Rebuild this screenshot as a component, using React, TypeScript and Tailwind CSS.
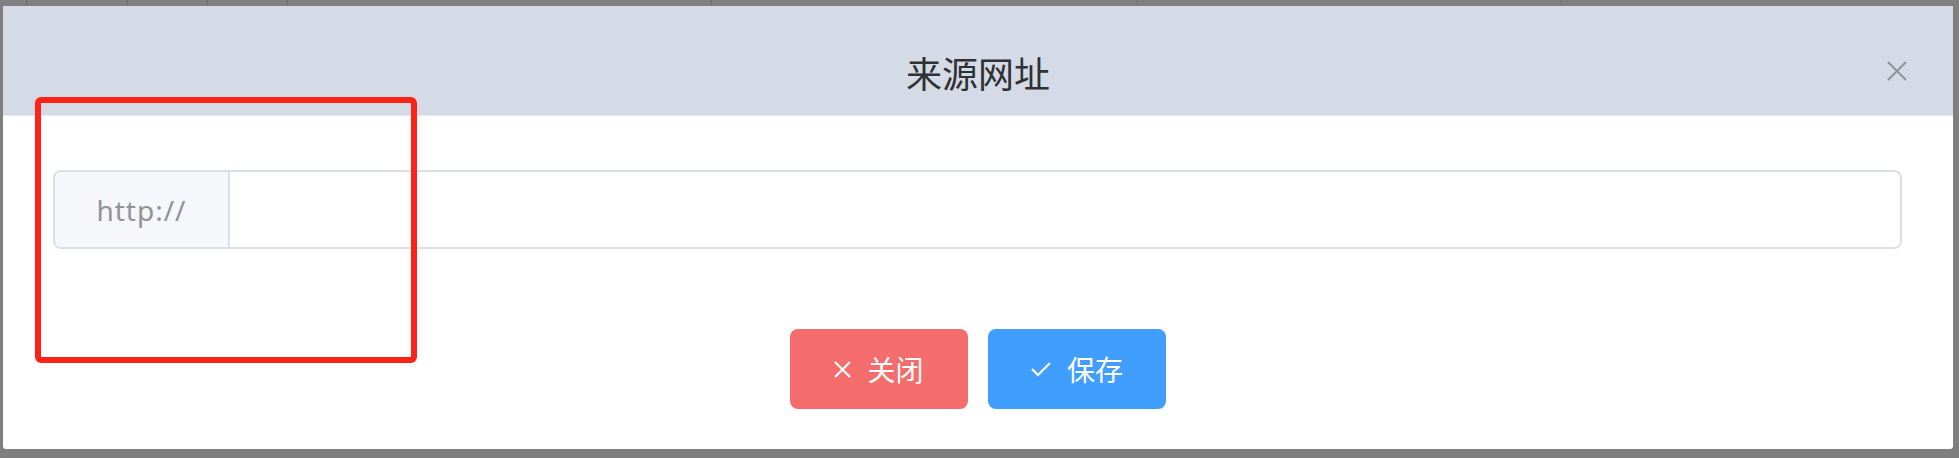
import React, { useState } from 'react';

// Lignes du tableau visibles derrière la modale (bande grise du haut)
const COLUMN_LINES = [26, 127, 207, 287, 711, 1137, 1561];

export default function App() {
  const [url, setUrl] = useState('');

  return (
    <div className="relative w-[1959px] h-[458px] bg-[#7f7f7f] pt-[6px] pl-[3px] overflow-hidden"
      style={{ fontFamily: '"Noto Sans", "Noto Sans CJK SC", sans-serif' }}>
      {/* Fond : colonnes du tableau */}
      {COLUMN_LINES.map(x => (
        <div key={x} className="absolute top-0 w-px h-[6px] bg-[#6c6c6c]" style={{ left: x }} />
      ))}

      {/* Modale */}
      <div className="relative w-[1950px] h-[443px] bg-white rounded-b-[3px] flex flex-col">
        {/* Header */}
        <div className="h-[110px] pt-[22px] bg-[#d4dbe6] border-b border-[#e6eaf0] flex items-center justify-center">
          <h1 className="text-[36px] leading-none text-[#303133] font-normal"
            style={{ fontFamily: '"Noto Sans CJK SC", sans-serif' }}>来源网址</h1>
        </div>
        <button className="absolute top-[55px] right-[46px] w-[20px] h-[20px] flex items-center justify-center">
          <svg width="20" height="20" viewBox="0 0 20 20" fill="none" stroke="#909399" strokeWidth="2">
            <path d="M1 1l18 18M19 1L1 19" />
          </svg>
        </button>

        {/* Body */}
        <div className="px-[50px] pt-[54px] flex flex-col">
          <div className="flex h-[79px] w-[1849px] border-2 border-[#dcdfe6] rounded-[8px] overflow-hidden">
            <div className="w-[175px] bg-[#f5f7fa] border-r-2 border-[#dcdfe6] flex items-center justify-center text-[28px] text-[#909399] tracking-[1px]">
              http://
            </div>
            <input value={url} onChange={e => setUrl(e.target.value)}
              className="flex-1 px-[30px] text-[28px] text-[#606266] outline-none bg-white" />
          </div>

          <div className="mt-[80px] flex justify-center gap-[20px]"
            style={{ fontFamily: '"Noto Sans CJK SC", sans-serif' }}>
            <button className="w-[178px] h-[80px] rounded-[8px] bg-[#f56c6c] text-white text-[28px] flex items-center justify-center gap-[16px]">
              <svg width="17" height="17" viewBox="0 0 17 17" fill="none" stroke="white" strokeWidth="2.2">
                <path d="M1 1l15 15M16 1L1 16" />
              </svg>
              <span>关闭</span>
            </button>
            <button className="w-[178px] h-[80px] rounded-[8px] bg-[#409eff] text-white text-[28px] flex items-center justify-center gap-[16px]">
              <svg width="20" height="16" viewBox="0 0 20 16" fill="none" stroke="white" strokeWidth="2.2">
                <path d="M1 8l6 6L19 2" />
              </svg>
              <span>保存</span>
            </button>
          </div>
        </div>
      </div>

      {/* Annotation rouge */}
      <div className="absolute left-[35px] top-[97px] w-[382px] h-[266px] border-[6px] border-[#ff2317] rounded-[6px] pointer-events-none" />
    </div>
  );
}
